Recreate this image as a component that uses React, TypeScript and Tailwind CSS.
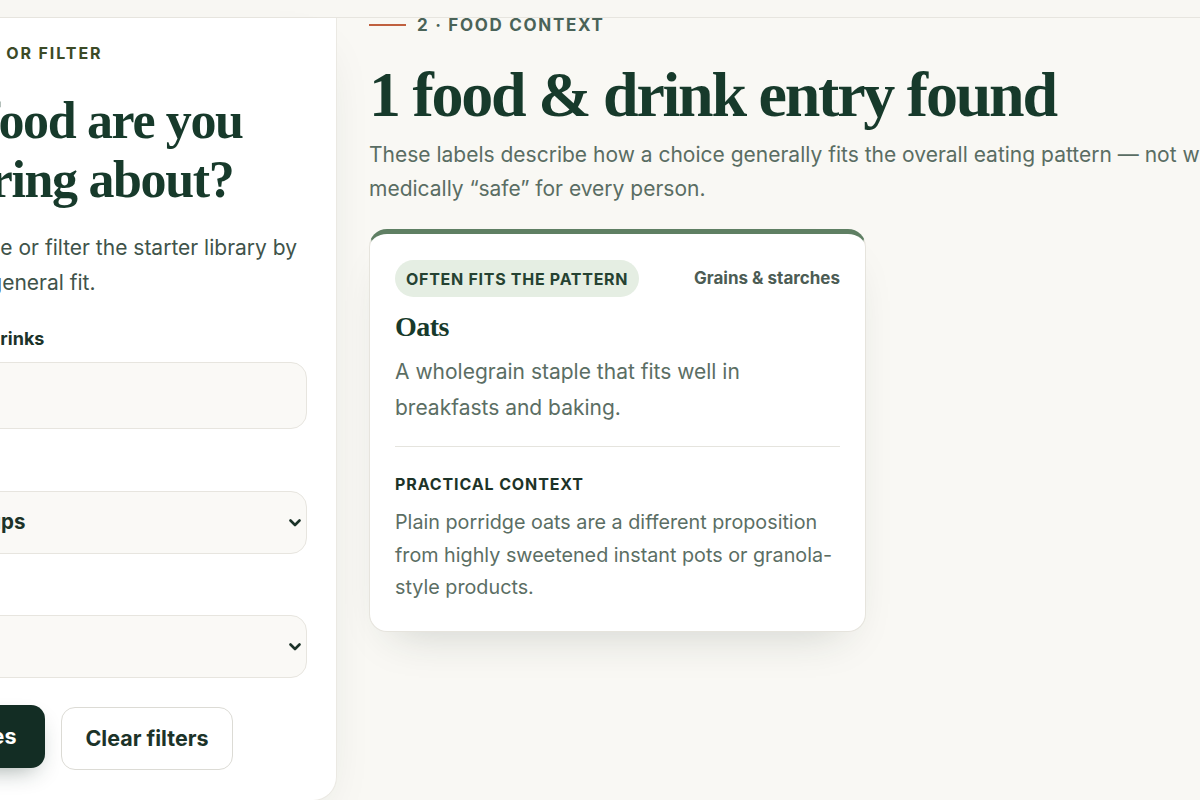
import React from "react";

function Chevron() {
  return (
    <svg width="12" height="8" viewBox="0 0 12 8" fill="none" className="shrink-0">
      <path d="M1.5 1.5 L6 6 L10.5 1.5" stroke="#1c3329" strokeWidth="2.6" strokeLinecap="round" strokeLinejoin="round" />
    </svg>
  );
}

export default function App() {
  return (
    <div className="w-[1200px] h-[800px] overflow-hidden bg-[#f9f8f4] font-['Inter',sans-serif] text-[#1c3329]">
      <div className="h-[18px] border-b border-[#e7e5df] bg-[#f8f7f3]" />
      <div className="flex items-start gap-8 -ml-[178px]">
        <aside className="w-[515px] shrink-0 bg-white rounded-br-[24px] border-r border-b border-[#ebe9e3] shadow-[0_20px_50px_-24px_rgba(30,50,40,0.18)] pl-[30px] pr-[29px] pt-[25px] pb-[30px]">
          <div className="flex items-center gap-3 h-[20px]">
            <span className="block w-[31px] h-[2px] bg-[#c0603f]" />
            <span className="text-[16px] leading-[20px] font-bold tracking-[0.12em] uppercase text-[#3c4a26]">
              1 · Search or filter
            </span>
          </div>
          <h2 className="mt-[28px] font-['Liberation_Serif',serif] font-bold text-[52px] leading-[59px] tracking-[-0.026em] text-[#173a2b]">
            What food are you wondering about?
          </h2>
          <p className="mt-[21px] text-[21px] leading-[35px] text-[#40534a]">
            Search by name or filter the starter library by category and general fit.
          </p>
          <div className="mt-[27px]">
            <label className="block text-[18px] leading-[24px] font-bold text-[#1c3329]">Search foods &amp; drinks</label>
            <div className="mt-[11px] h-[67px] rounded-[16px] border border-[#e7e5df] bg-[#faf9f6] px-5 flex items-center text-[20px] text-[#8a958f]">
              Try oats
            </div>
          </div>
          <div className="mt-[27px]">
            <label className="block text-[18px] leading-[24px] font-bold text-[#1c3329]">Food group</label>
            <div className="mt-[11px] h-[63px] rounded-[16px] border border-[#e7e5df] bg-[#faf9f6] pl-5 pr-[5px] flex items-center justify-between text-[20.5px] font-bold text-[#1c3329]">
              <span>All food groups</span>
              <Chevron />
            </div>
          </div>
          <div className="mt-[26px]">
            <label className="block text-[18px] leading-[24px] font-bold text-[#1c3329]">Fit</label>
            <div className="mt-[11px] h-[63px] rounded-[16px] border border-[#e7e5df] bg-[#faf9f6] pl-5 pr-[5px] flex items-center justify-between text-[20.5px] font-bold text-[#1c3329]">
              <span>Any</span>
              <Chevron />
            </div>
          </div>
          <div className="mt-[29px] flex items-center gap-4">
            <button className="h-[63px] px-[29px] rounded-[14px] bg-[#132d24] text-white text-[21.5px] font-bold -translate-y-[2px] shadow-[0_10px_24px_-10px_rgba(19,45,36,0.45)]">
              See matches
            </button>
            <button className="h-[63px] px-[23px] rounded-[14px] bg-white border border-[#dcdbd5] text-[#1c3329] text-[21.5px] font-bold">
              Clear filters
            </button>
          </div>
        </aside>

        <main className="w-[1018px] shrink-0">
          <div className="-mt-[3px] flex items-center gap-[11px] h-[20px]">
            <span className="block w-[37px] h-[2px] bg-[#c0603f]" />
            <span className="text-[17px] leading-[20px] font-bold tracking-[0.1em] uppercase text-[#4a6358]">
              2 · Food context
            </span>
          </div>
          <h1 className="mt-[25px] font-['Liberation_Serif',serif] font-bold text-[64px] leading-[1.1] tracking-[-0.035em] text-[#173a2b]">
            1 food &amp; drink entry found
          </h1>
          <p className="mt-2 max-w-[980px] text-[21px] leading-[34px] text-[#5a6d63]">
            These labels describe how a choice generally fits the overall eating pattern — not whether it is medically “safe” for every person.
          </p>
          <div className="mt-[23px] grid grid-cols-2 gap-[24px]">
            <article className="bg-white rounded-[18px] border border-[#e6e4dd] border-t-[5px] border-t-[#5f7f63] px-[25px] pt-[26px] pb-[27px] shadow-[0_22px_44px_-24px_rgba(30,50,40,0.22)]">
              <div className="flex items-center justify-between">
                <span className="h-[37px] px-[11px] rounded-full bg-[#e5eee3] flex items-center text-[16px] font-bold tracking-[0.045em] uppercase text-[#254232]">
                  Often fits the pattern
                </span>
                <span className="text-[17px] font-bold text-[#4c5c54]">Grains &amp; starches</span>
              </div>
              <h3 className="mt-[12px] font-['Liberation_Serif',serif] font-bold text-[28px] leading-[36px] tracking-[-0.02em] text-[#173a2b]">
                Oats
              </h3>
              <p className="mt-[9px] text-[21px] leading-[36px] text-[#5b6e64]">
                A wholegrain staple that fits well in breakfasts and baking.
              </p>
              <div className="mt-[20px] h-px bg-[#e5e4de]" />
              <div className="mt-[27px] text-[16px] leading-[20px] font-bold tracking-[0.055em] uppercase text-[#1d3328]">
                Practical context
              </div>
              <p className="mt-[12px] text-[19.75px] leading-[32.5px] text-[#5b6e64]">
                Plain porridge oats are a different proposition from highly sweetened instant pots or granola-style products.
              </p>
            </article>
          </div>
        </main>
      </div>
    </div>
  );
}
